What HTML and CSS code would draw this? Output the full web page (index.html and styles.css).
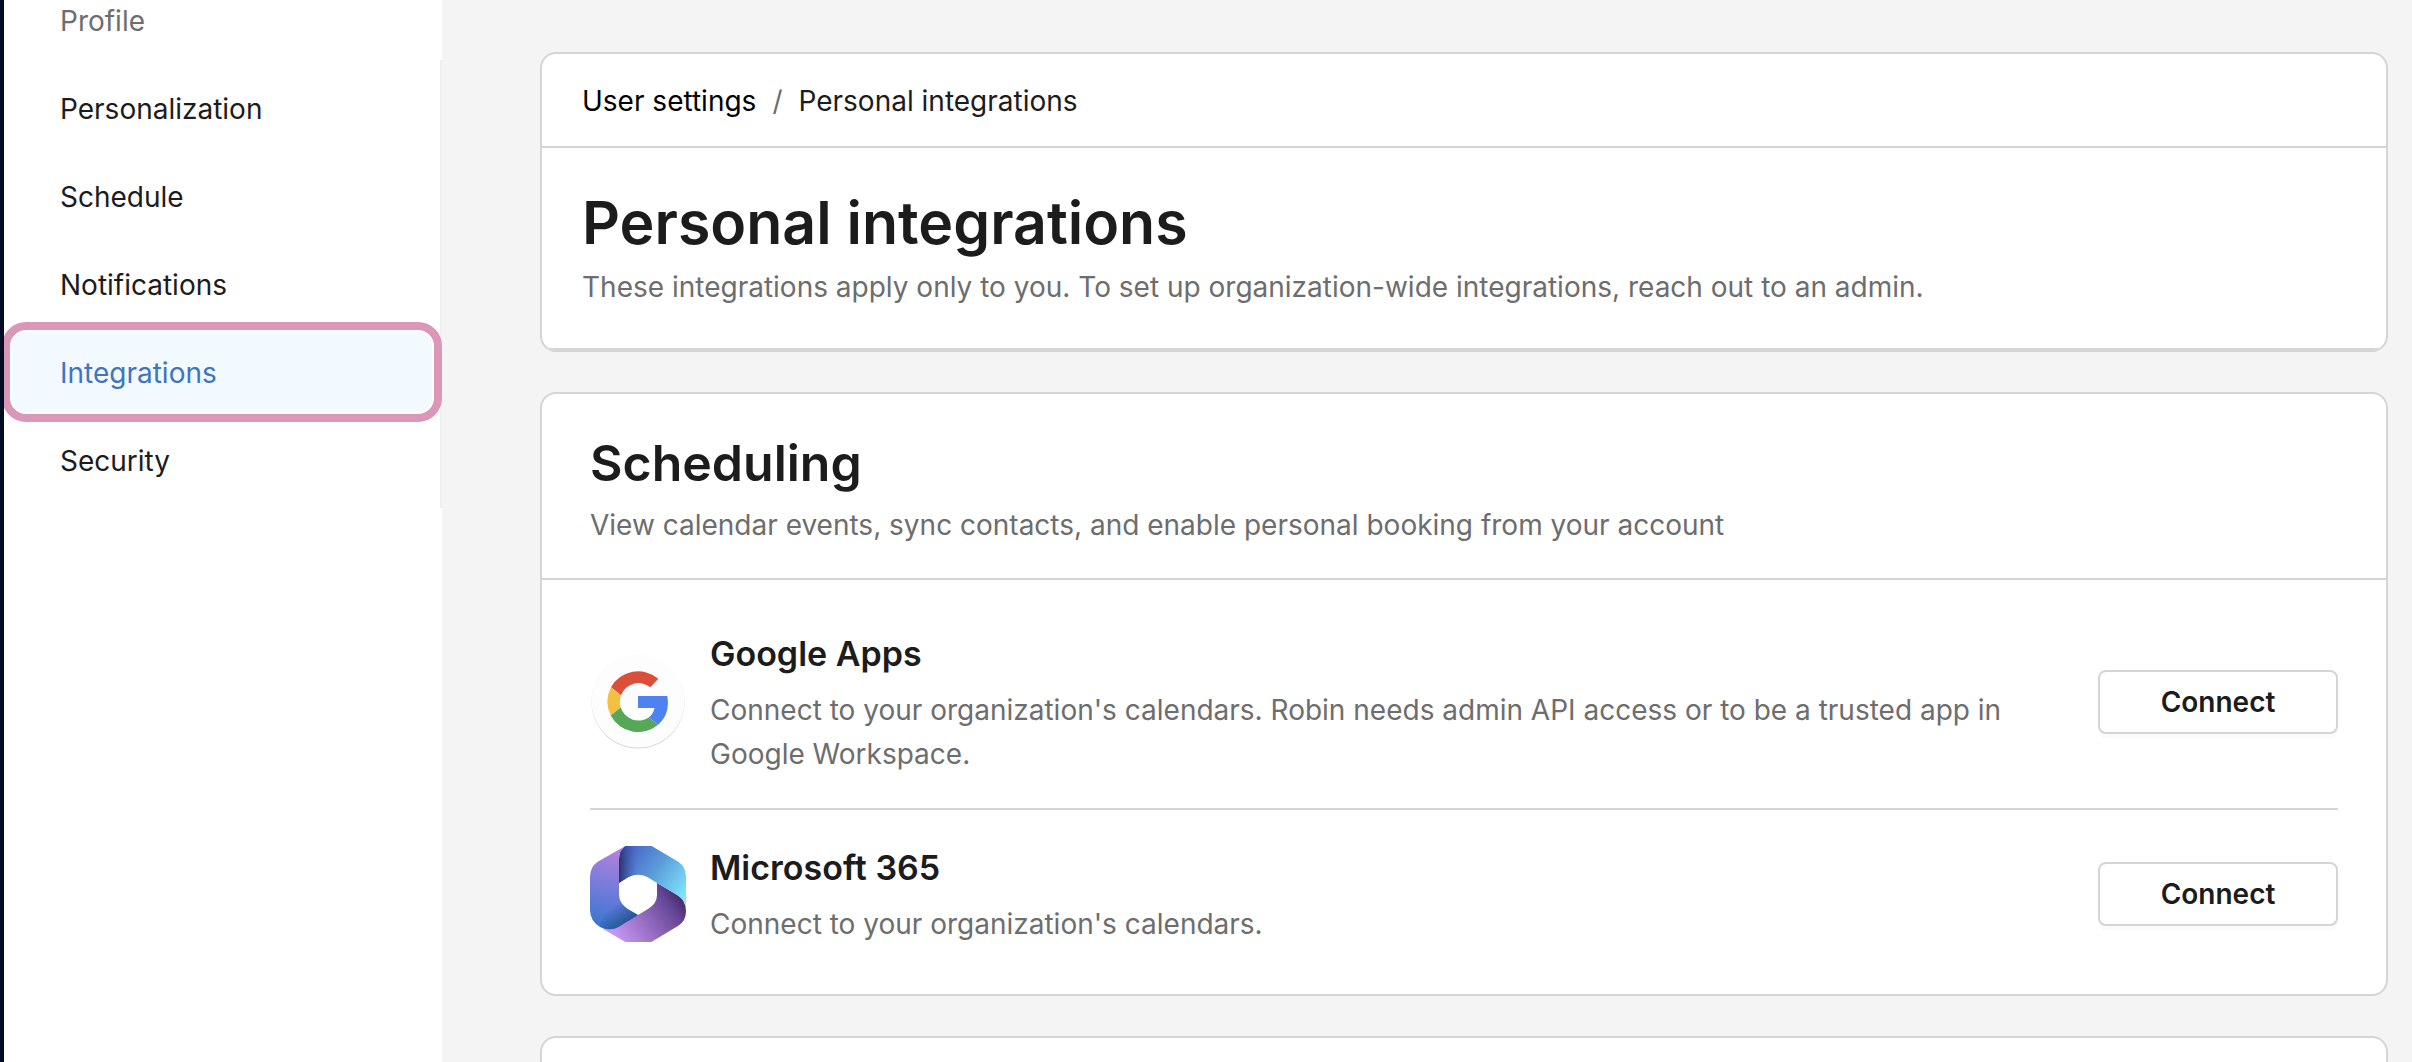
FILE: index.html
```html
<!DOCTYPE html>
<html lang="en">
<head>
    <meta charset="UTF-8">
    <meta name="viewport" content="width=device-width, initial-scale=1.0">
    <title>Personal integrations</title>
    <link rel="stylesheet" href="styles.css">
</head>
<body>
    <div class="app">
        <div class="rail"></div>

        <!-- Settings menu -->
        <nav class="sidebar">
            <div class="sidebar-title">Profile</div>
            <ul class="menu">
                <li><a class="menu-link" href="#">Personalization</a></li>
                <li><a class="menu-link" href="#">Schedule</a></li>
                <li><a class="menu-link" href="#">Notifications</a></li>
                <li><a class="menu-link active" href="#">Integrations</a></li>
                <li><a class="menu-link" href="#">Security</a></li>
            </ul>
        </nav>

        <main class="content">
            <section class="card">
                <div class="breadcrumb">
                    <a href="#">User settings</a>
                    <span class="slash">/</span>
                    <span class="current">Personal integrations</span>
                </div>
                <div class="page-header">
                    <h1>Personal integrations</h1>
                    <p>These integrations apply only to you. To set up organization-wide integrations, reach out to an admin.</p>
                </div>
            </section>

            <section class="card">
                <div class="card-header">
                    <h2>Scheduling</h2>
                    <p>View calendar events, sync contacts, and enable personal booking from your account</p>
                </div>
                <div class="list">
                    <div class="row">
                        <svg class="logo" viewBox="0 0 96 96" aria-hidden="true">
                            <circle cx="48" cy="48" r="46.5" fill="#d6d6d6"/>
                            <circle cx="48" cy="47" r="46.5" fill="#fdfdfd"/>
                            <path fill="#db4f3a" d="M68.3 24.7A31.2 31.2 0 0 0 21 33.2L31 41.3A18.7 18.7 0 0 1 60.3 33.3Z"/>
                            <path fill="#f3c042" d="M21 33.2A31.2 31.2 0 0 0 20.7 61.5L30.7 53.5A18.7 18.7 0 0 1 31 41.3Z"/>
                            <path fill="#56a857" d="M20.7 61.5A31.2 31.2 0 0 0 68.2 70.8L58.7 63.6A18.7 18.7 0 0 1 30.7 53.5Z"/>
                            <path fill="#4f82f1" d="M48 42H77.3C79 52 77.5 62.5 68.2 70.8L58.7 63.6C61.8 61.3 63.6 58.4 64.5 54H48Z"/>
                        </svg>
                        <div class="info">
                            <h3>Google Apps</h3>
                            <p>Connect to your organization's calendars. Robin needs admin API access or to be a trusted app in Google Workspace.</p>
                        </div>
                        <button class="btn" type="button">Connect</button>
                    </div>
                    <div class="row">
                        <svg class="logo" viewBox="30 33 288 288" aria-hidden="true">
                            <defs>
                                <linearGradient id="left" gradientUnits="userSpaceOnUse" x1="115" y1="50" x2="65" y2="275">
                                    <stop offset="0" stop-color="#b081dc"/>
                                    <stop offset="0.5" stop-color="#737cd9"/>
                                    <stop offset="1" stop-color="#3a76cf"/>
                                </linearGradient>
                                <linearGradient id="leftShade" gradientUnits="userSpaceOnUse" x1="105" y1="210" x2="150" y2="262">
                                    <stop offset="0" stop-color="#235391" stop-opacity="0"/>
                                    <stop offset="1" stop-color="#235391"/>
                                </linearGradient>
                                <linearGradient id="top" gradientUnits="userSpaceOnUse" x1="140" y1="65" x2="318" y2="190">
                                    <stop offset="0" stop-color="#4b69c8"/>
                                    <stop offset="0.45" stop-color="#5b9edb"/>
                                    <stop offset="1" stop-color="#81ebff"/>
                                </linearGradient>
                                <linearGradient id="topShade" gradientUnits="userSpaceOnUse" x1="117" y1="0" x2="172" y2="0">
                                    <stop offset="0" stop-color="#262d63" stop-opacity="0.9"/>
                                    <stop offset="1" stop-color="#3c56ae" stop-opacity="0"/>
                                </linearGradient>
                                <linearGradient id="bottom" gradientUnits="userSpaceOnUse" x1="110" y1="310" x2="300" y2="175">
                                    <stop offset="0" stop-color="#c597f2"/>
                                    <stop offset="0.5" stop-color="#8d65b8"/>
                                    <stop offset="0.8" stop-color="#654596"/>
                                    <stop offset="1" stop-color="#432966"/>
                                </linearGradient>
                            </defs>
                            <path fill="url(#bottom)" d="M231 144L290 178Q318 196 318 228Q318 258 295 272L214 321H136L68 281L174 240L205 221Q231 205 231 180Z"/>
                            <path fill="url(#top)" d="M117 144V75Q117 45 136 33H215L295 80Q318 96 318 125V215Q312 192 290 180L231 144L202 126Q174 112 146 126Z"/>
                            <path fill="url(#topShade)" d="M117 144V75Q117 45 136 33H180V118Q163 118 146 126Z"/>
                            <path fill="url(#left)" d="M136 33Q117 45 117 75V180Q118 205 143 222L174 240L115 276Q90 290 60 276Q30 257 30 225V125Q31 95 53 80Z"/>
                            <path fill="url(#leftShade)" d="M117 180Q118 205 143 222L174 240L115 276Q90 290 60 276L80 190Z"/>
                        </svg>
                        <div class="info">
                            <h3>Microsoft 365</h3>
                            <p>Connect to your organization's calendars.</p>
                        </div>
                        <button class="btn" type="button">Connect</button>
                    </div>
                </div>
            </section>

            <section class="card card-next"></section>
        </main>
    </div>
</body>
</html>
```
FILE: styles.css
```css
* {
    box-sizing: border-box;
}
body {
    margin: 0;
    font-family: Inter, "Liberation Sans", sans-serif;
    font-size: 28px;
    line-height: 44px;
    color: #1c1c1c;
    background: #f4f4f4;
}
h1, h2, h3, p, ul {
    margin: 0;
    padding: 0;
}
a {
    color: inherit;
    text-decoration: none;
}
.app {
    display: flex;
    height: 100vh;
    overflow: hidden;
}
.rail {
    flex: none;
    width: 4px;
    background: #020c22;
    z-index: 1;
}

/* Sidebar, scrolled down a little */
.sidebar {
    flex: none;
    width: 438px;
    background: #fff;
}
.sidebar-title {
    margin-top: -24px;
    padding: 23px 56px 17px;
    color: #6d6d6d;
}
.menu {
    list-style: none;
    padding: 4px 0;
    border-right: 2px solid #f0f0f0;
}
.menu-link {
    display: block;
    position: relative;
    padding: 23px 56px 21px;
}
.menu-link.active {
    color: #3f74c0;
    z-index: 0;
}
.menu-link.active::before {
    content: "";
    position: absolute;
    inset: -6px -2px;
    border: 8px solid #db97b8;
    border-radius: 24px;
    background: #f2f9ff;
    box-shadow: inset 0 0 0 2px #fff;
    z-index: -1;
}

/* Cards */
.content {
    flex: 1;
    min-width: 0;
    padding: 52px 24px 0 98px;
}
.card {
    margin-bottom: 40px;
    border: 2px solid #d5d5d5;
    border-radius: 16px;
    background: #fff;
    overflow: hidden;
}
.card-next {
    height: 200px;
}
.breadcrumb {
    display: flex;
    gap: 16px;
    padding: 25px 40px 23px;
    border-bottom: 2px solid #d5d5d5;
}
.breadcrumb a {
    color: #000;
}
.slash {
    color: #6d6d6d;
}
.page-header {
    padding: 33px 40px 39px;
    border-bottom: 2px solid #d5d5d5;
}
.card-header {
    padding: 33px 48px 31px;
    border-bottom: 2px solid #d5d5d5;
}
.page-header p, .card-header p, .info p {
    color: #6d6d6d;
}
h1, h2, h3 {
    font-weight: 600;
}
h1 {
    font-size: 59px;
    line-height: 84px;
}
h2 {
    margin-bottom: 4px;
    font-size: 50px;
    line-height: 72px;
}
h3 {
    margin-bottom: 8px;
    font-size: 34px;
    line-height: 52px;
}
.list {
    padding: 16px 48px;
}
.row {
    display: flex;
    align-items: center;
    gap: 24px;
    padding: 32px 0;
}
.row + .row {
    border-top: 2px solid #d5d5d5;
}
.logo {
    flex: none;
    width: 96px;
    height: 96px;
}
.info {
    flex: 1;
    padding-right: 24px;
}
.btn {
    width: 240px;
    height: 64px;
    border: 2px solid #d5d5d5;
    border-radius: 8px;
    background: #fff;
    box-shadow: 0 4px 0 #fafafa;
    color: #1c1c1c;
    font-family: inherit;
    font-size: 28px;
    font-weight: 600;
}
```
